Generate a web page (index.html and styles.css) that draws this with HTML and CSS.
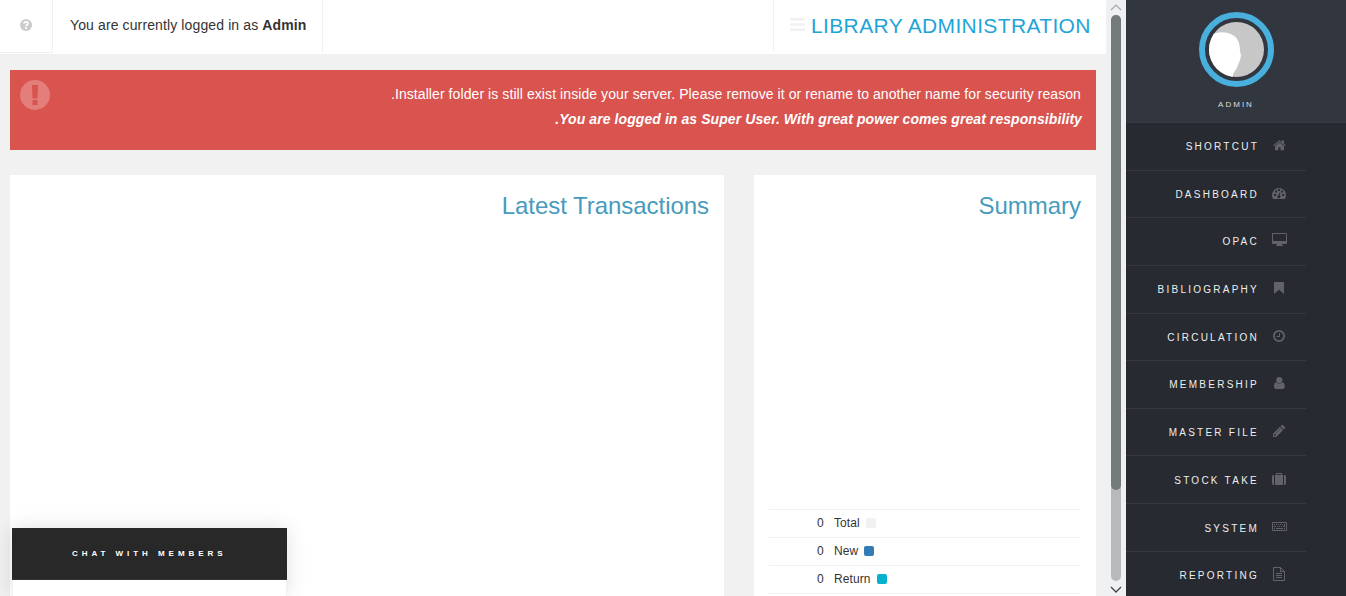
FILE: index.html
```html
<!DOCTYPE html>
<html lang="en">
<head>
<meta charset="utf-8">
<title>Library Administration</title>
<link rel="stylesheet" href="styles.css">
</head>
<body>
<div class="app">
  <main class="main">
    <header class="topbar">
      <div class="help"><svg width="12" height="12" viewBox="0 0 12 12"><circle cx="6" cy="6" r="6" fill="#cbcbcb"/><path d="M3.900 4.500C4 2.200 8 2.200 8 4.500 8 5.800 6.100 5.800 6.100 7.200" fill="none" stroke="#fff" stroke-width="1.700"/><path d="M5.200 8.200h1.800v1.700H5.200z" fill="#fff"/></svg></div>
      <div class="login">You are currently logged in as <b>Admin</b></div>
      <div class="brand"><svg width="15" height="13" viewBox="0 0 15 13" fill="#f1f1f1"><path d="M0 0h15v2.600H0zM0 5.200h15v2.600H0zM0 10.400h15V13H0z"/></svg><h1>LIBRARY ADMINISTRATION</h1></div>
    </header>
    <section class="alert">
      <svg class="alert-icon" width="30" height="30" viewBox="0 0 30 30"><path fill="#e37e7b" fill-rule="evenodd" d="M15 0a15 15 0 1 1 0 30a15 15 0 1 1 0-30zM12 5l.5 13.500h5L18 5zM12.500 20v5h5v-5z"/></svg>
      <div class="alert-text">
        <p class="notice">.Installer folder is still exist inside your server. Please remove it or rename to another name for security reason</p>
        <p class="warning">.You are logged in as Super User. With great power comes great responsibility</p>
      </div>
    </section>
    <div class="panels">
      <section class="panel latest"><h2>Latest Transactions</h2></section>
      <section class="panel summary"><h2>Summary</h2>
        <ul class="stats">
          <li><span class="num">0</span><span>Total</span><i class="chip total"></i></li>
          <li><span class="num">0</span><span>New</span><i class="chip new"></i></li>
          <li><span class="num">0</span><span>Return</span><i class="chip return"></i></li>
          <li></li>
        </ul>
      </section>
    </div>
    <aside class="chat"><div class="chat-head">CHAT WITH MEMBERS</div><div class="chat-body"></div></aside>
  </main>
  <div class="scroll">
    <svg width="12" height="8" viewBox="0 0 12 8"><path d="M1 7l5-5 5 5" fill="none" stroke="#a5a7a9" stroke-width="1.200"/></svg>
    <div class="track"><div class="thumb"></div></div>
    <svg width="12" height="8" viewBox="0 0 12 8"><path d="M1 2l5 5 5-5" fill="none" stroke="#404346" stroke-width="1.300"/></svg>
  </div>
  <nav class="side">
    <div class="profile">
      <svg width="76" height="76" viewBox="0 0 76 76"><defs><clipPath id="face"><circle cx="38.500" cy="38.500" r="27.500"/></clipPath></defs><circle cx="38.500" cy="38.500" r="34.500" fill="none" stroke="#49afdd" stroke-width="6"/><circle cx="38.500" cy="38.500" r="27.500" fill="#c7c7c7"/><path clip-path="url(#face)" fill="#fff" d="M8 27C16 20 29 19 37 25.500c4 4 5 9 5 15l1 3c-.2 5-2 8-4 13-1 3-4 5-4 8v4H8z"/></svg>
      <span>ADMIN</span>
    </div>
    <ul class="menu">
      <li><span>SHORTCUT</span><svg viewBox="0 0 16 16"><path transform="translate(1 0.300) scale(.0078)" d="M1408 992v480q0 26-19 45t-45 19h-384v-384h-256v384h-384q-26 0-45-19t-19-45v-480q0-1 .5-3t.5-3l575-474 575 474q1 2 1 6zm223-69l-62 74q-8 9-21 11h-3q-13 0-21-7l-692-577-692 577q-12 8-24 7-13-2-21-11l-62-74q-8-10-7-23.500t11-21.500l719-599q32-26 76-26t76 26l244 204v-195q0-14 9-23t23-9h192q14 0 23 9t9 23v408l219 182q10 8 11 21.500t-7 23.500z"/></svg></li>
      <li><span>DASHBOARD</span><svg viewBox="0 0 16 16"><path fill-rule="evenodd" d="M1.200 13C.3 11.700 0 10.600 0 9a7 7 0 0 1 14 0c0 1.600-.3 2.700-1.200 4zM2 8v2h2V8zM3.100 4.500v2h2v-2zM6 3v2h2V3zM9.100 4.500v2h2v-2zM10.200 8v2h2V8zM7.600 6.500L6.600 9.200A1.500 1.500 0 1 0 7.700 9.400L8.500 6.700z"/></svg></li>
      <li><span>OPAC</span><svg viewBox="0 1 16 16"><path fill-rule="evenodd" d="M1 1h13q1 0 1 1v9q0 1-1 1H10v1h1v1H4v-1h1v-1H1q-1 0-1-1V2q0-1 1-1zM1 2v7h13V2z"/></svg></li>
      <li><span>BIBLIOGRAPHY</span><svg viewBox="0 0 16 16"><path d="M2.700 1h8.600q.7 0 .7.700V13L7 8.800 2 13V1.700Q2 1 2.700 1z"/></svg></li>
      <li><span>CIRCULATION</span><svg viewBox="0 0 16 16"><circle cx="7" cy="7" r="5.100" fill="none" stroke="#616368" stroke-width="1.800"/><path d="M7 4h1v4H4.500V7H7z"/></svg></li>
      <li><span>MEMBERSHIP</span><svg viewBox="0 0 16 16"><circle cx="7.300" cy="4" r="3.100"/><path d="M4.300 6.200c1.700 1.600 4.300 1.600 6 0C12 6.500 12.800 8 12.800 10.600c0 1.500-.8 2.400-2 2.400H4c-1.200 0-2-.9-2-2.400C2 8 2.600 6.500 4.300 6.200z"/></svg></li>
      <li><span>MASTER FILE</span><svg viewBox="0 0 16 16"><path fill-rule="evenodd" d="M1 9.800l6.700-6.700 3.200 3.200L4.200 13H1zM2 10.500v1.300h1.500l.5-.8-1.200-1.200zM4 8.900L8 4.900l.3.300-4 4zM8.400 2.400l1.200-1.200q.7-.7 1.400 0l1.800 1.800q.7.700 0 1.400l-1.200 1.200z"/></svg></li>
      <li class="low"><span>STOCK TAKE</span><svg viewBox="0 0 16 16"><path fill-rule="evenodd" d="M4 3V1.700q0-.7.7-.7h4.600q.7 0 .7.700V3h1v10H3V3zM5 3h4V2H5zM2 3v10h-.6Q0 13 0 11.600V4.400Q0 3 1.400 3zM12 3h.6Q14 3 14 4.400v7.200q0 1.400-1.400 1.400H12z"/></svg></li>
      <li class="low"><span>SYSTEM</span><svg viewBox="0 0 16 16"><path fill-rule="evenodd" d="M1 2h13q1 0 1 1v7q0 1-1 1H1q-1 0-1-1V3q0-1 1-1zM1 3v7h13V3z"/><path d="M2 4h1v1H2zm2 0h1v1H4zm2 0h1v1H6zm2 0h1v1H8zm2 0h1v1h-1zm2 0h1v3h-2V6h1zM2 6h2v1H2zm3 0h1v1H5zm2 0h1v1H7zm2 0h1v1H9zM2 8h1v1H2zm2 0h7v1H4zm8 0h1v1h-1z"/></svg></li>
      <li><span>REPORTING</span><svg viewBox="0 0 16 16"><path fill="none" stroke="#616368" d="M1.500.5h7l4 4v9h-11zM8.500.5v4h4"/><path d="M4 6h6v1H4zm0 2h6v1H4zm0 2h6v1H4z"/></svg></li>
    </ul>
  </nav>
</div>
</body>
</html>
```
FILE: styles.css
```css
* { box-sizing: border-box; }
body { margin: 0; overflow: hidden; font-family: "Liberation Sans", Arial, sans-serif; color: #333; }
h1, h2, p, ul { margin: 0; padding: 0; font-weight: 400; list-style: none; }
svg { display: block; flex: none; }
.app { display: flex; width: 1346px; height: 596px; overflow: hidden; }
.main { position: relative; width: 1106px; height: 596px; background: #f1f1f1; overflow: hidden; }

.topbar { display: flex; height: 54px; background: #fff; }
.help { width: 53px; height: 53px; padding: 19px 0 0 20px; border-right: 1px solid #f1f1f1; border-bottom: 1px solid #f1f1f1; }
.login { width: 270px; height: 52px; padding-left: 17px; border-right: 1px solid #f1f1f1; font-size: 14px; line-height: 50px; letter-spacing: .12px; white-space: nowrap; }
.brand { display: flex; align-items: flex-start; width: 333px; height: 51px; margin-left: auto; padding-left: 16px; border-left: 1px solid #f1f1f1; }
.brand svg { margin-top: 18px; }
.brand h1 { margin-left: 6px; font-size: 21px; line-height: 52px; letter-spacing: .36px; color: #1fa4d8; white-space: nowrap; }

.alert { display: flex; justify-content: space-between; height: 80px; margin: 16px 10px 25px; padding: 10px 15px 0 10px; background: #d9534f; color: #fff; }
.alert-text { padding-top: 2px; text-align: right; font-size: 14px; line-height: 25px; white-space: nowrap; }
.notice { letter-spacing: .08px; }
.warning { margin-right: -1px; font-weight: 700; font-style: italic; letter-spacing: .08px; }

.panels { display: flex; gap: 30px; margin: 0 10px; }
.panel { height: 440px; padding: 15px 15px 0; background: #fff; }
.latest { width: 714px; }
.summary { width: 342px; }
.panel h2 { font-size: 24px; line-height: 32px; color: #479bbc; text-align: right; letter-spacing: -.04px; }
.stats { margin-top: 287px; }
.stats li { display: flex; align-items: center; height: 28px; padding: 0 0 2px 48px; border-top: 1px solid #f1f1f1; font-size: 12px; letter-spacing: .1px; }
.num { width: 17px; }
.chip { width: 10px; height: 10px; margin: 1px 0 0 6px; border-radius: 2px; }
.total { background: #f1f1f1; }
.new { background: #337ab7; }
.return { background: #05b1cf; }

.chat { position: absolute; left: 12px; bottom: 0; width: 275px; height: 68px; box-shadow: 0 0 20px rgba(0, 0, 0, .12); }
.chat-head { height: 52px; padding-left: 60px; background: #282828; border-bottom: 1px solid #333; color: #fff; font-size: 8px; font-weight: 700; line-height: 51px; letter-spacing: 3.95px; white-space: nowrap; }
.chat-body { height: 16px; background: #fff; border: solid #f1f1f1; border-width: 0 1px; }

.scroll { display: flex; flex-direction: column; align-items: center; width: 20px; height: 596px; padding: 3px 0; background: #eff0f2; }
.track { width: 10px; height: 566px; margin: 4px 0; border-radius: 5px; background: #b7b9bb; }
.thumb { height: 475px; border-radius: 5px; background: #74797c; }

.side { width: 220px; background: #272a31; }
.profile { display: flex; flex-direction: column; align-items: center; height: 123px; padding-top: 11px; background: #32363f; border-bottom: 1px solid #383b45; color: #ddd; }
.profile span { margin-top: 12px; font-size: 8px; line-height: 12px; letter-spacing: 2px; }
.menu { width: 180px; }
.menu li { display: flex; align-items: flex-start; justify-content: flex-end; height: 47.65px; padding: 16px 18px 0 0; border-bottom: 1px solid #36383c; }
.menu .low { padding-top: 17px; }
.menu span { margin-right: 13px; color: #eee; font-size: 10px; line-height: 16px; letter-spacing: 2.25px; white-space: nowrap; }
.menu svg { width: 16px; height: 16px; margin-top: -1px; fill: #616368; }
```
